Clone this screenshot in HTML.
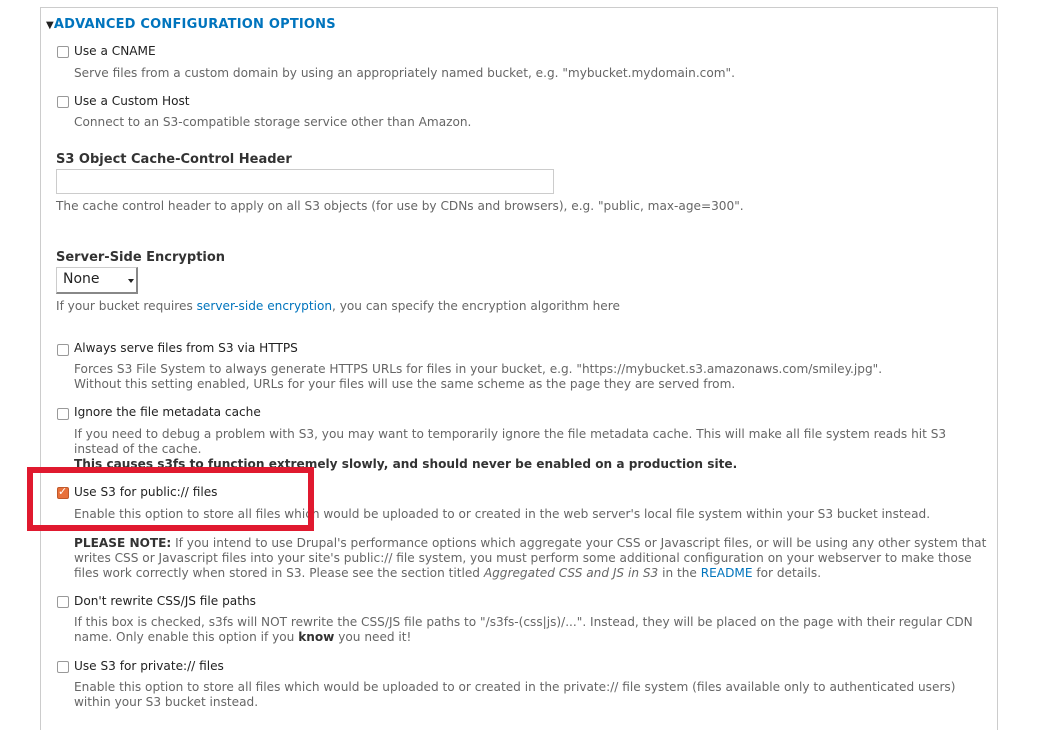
<!DOCTYPE html>
<html><head><meta charset="utf-8"><style>
html,body{margin:0;width:1037px;height:730px;overflow:hidden}
body{background:#fff;font-family:"DejaVu Sans","Liberation Sans",sans-serif;font-size:12.12px;color:#333;position:relative}
.box{position:absolute;left:40px;top:7px;width:956px;height:740px;border:1px solid #ccc;border-bottom:none}
.t{position:absolute;white-space:nowrap;line-height:15px}
.l{color:#222}
.d{color:#666}
.cb{position:absolute;width:10px;height:10px;border:1px solid #999;border-radius:2px;background:#fff}
a{color:#0074bd;text-decoration:none}
b{color:#333}
</style></head><body>
<div class="box"></div>
<div class="t" style="left:46px;top:17px;font-weight:bold;color:#0074bd;font-size:13px;letter-spacing:0.2px"><span style="color:#222;font-size:10px">&#9660;</span>ADVANCED CONFIGURATION OPTIONS</div>

<div class="cb" style="left:57px;top:46px"></div><div class="t l" style="left:74px;top:44px">Use a CNAME</div>
<div class="t d" style="left:74px;top:66px">Serve files from a custom domain by using an appropriately named bucket, e.g. "mybucket.mydomain.com".</div>
<div class="cb" style="left:57px;top:96px"></div><div class="t l" style="left:74px;top:94px">Use a Custom Host</div>
<div class="t d" style="left:74px;top:115px">Connect to an S3-compatible storage service other than Amazon.</div>

<div class="t" style="left:56px;top:152px;font-weight:bold;font-size:13px">S3 Object Cache-Control Header</div>
<div style="position:absolute;left:56px;top:169px;width:496px;height:23px;border:1px solid #ccc"></div>
<div class="t d" style="left:56px;top:199px">The cache control header to apply on all S3 objects (for use by CDNs and browsers), e.g. "public, max-age=300".</div>

<div class="t" style="left:56px;top:250px;font-weight:bold;font-size:13px">Server-Side Encryption</div>
<div style="position:absolute;left:56px;top:267px;width:82px;height:27px;border:1px solid #ccc;border-right:2px solid #888;border-bottom:2px solid #888;box-sizing:border-box"></div>
<div class="t" style="left:63px;top:272px;font-size:14px;color:#222">None</div>
<div style="position:absolute;left:128px;top:279px;width:0;height:0;border-left:3px solid transparent;border-right:3px solid transparent;border-top:4px solid #222"></div>
<div class="t d" style="left:56px;top:299px">If your bucket requires <a>server-side encryption</a>, you can specify the encryption algorithm here</div>

<div class="cb" style="left:57px;top:344px"></div><div class="t l" style="left:74px;top:341px">Always serve files from S3 via HTTPS</div>
<div class="t d" style="left:74px;top:362px">Forces S3 File System to always generate HTTPS URLs for files in your bucket, e.g. "https://mybucket.s3.amazonaws.com/smiley.jpg".</div>
<div class="t d" style="left:74px;top:377px">Without this setting enabled, URLs for your files will use the same scheme as the page they are served from.</div>

<div class="cb" style="left:57px;top:408px"></div><div class="t l" style="left:74px;top:405px">Ignore the file metadata cache</div>
<div class="t d" style="left:74px;top:427px">If you need to debug a problem with S3, you may want to temporarily ignore the file metadata cache. This will make all file system reads hit S3</div>
<div class="t d" style="left:74px;top:442px">instead of the cache.</div>
<div class="t" style="left:74px;top:457px;font-weight:bold">This causes s3fs to function extremely slowly, and should never be enabled on a production site.</div>

<div class="cb" style="left:57px;top:487px;background:#e8703a;border-color:#c0582a"></div>
<div class="t" style="left:58px;top:484px;color:#fff;font-size:11px;font-weight:bold">&#10003;</div>
<div class="t l" style="left:74px;top:485px">Use S3 for public:// files</div>
<div class="t d" style="left:74px;top:507px">Enable this option to store all files which would be uploaded to or created in the web server's local file system within your S3 bucket instead.</div>
<div style="position:absolute;left:27px;top:467px;width:275px;height:52px;border:6px solid #e0192f"></div>

<div class="t d" style="left:74px;top:536px"><b>PLEASE NOTE:</b> If you intend to use Drupal's performance options which aggregate your CSS or Javascript files, or will be using any other system that</div>
<div class="t d" style="left:74px;top:551px">writes CSS or Javascript files into your site's public:// file system, you must perform some additional configuration on your webserver to make those</div>
<div class="t d" style="left:74px;top:566px">files work correctly when stored in S3. Please see the section titled <i>Aggregated CSS and JS in S3</i> in the <a>README</a> for details.</div>

<div class="cb" style="left:57px;top:596px"></div><div class="t l" style="left:74px;top:594px">Don't rewrite CSS/JS file paths</div>
<div class="t d" style="left:74px;top:615px">If this box is checked, s3fs will NOT rewrite the CSS/JS file paths to "/s3fs-(css|js)/...". Instead, they will be placed on the page with their regular CDN</div>
<div class="t d" style="left:74px;top:630px">name. Only enable this option if you <b>know</b> you need it!</div>

<div class="cb" style="left:57px;top:661px"></div><div class="t l" style="left:74px;top:659px">Use S3 for private:// files</div>
<div class="t d" style="left:74px;top:680px">Enable this option to store all files which would be uploaded to or created in the private:// file system (files available only to authenticated users)</div>
<div class="t d" style="left:74px;top:695px">within your S3 bucket instead.</div>
</body></html>
